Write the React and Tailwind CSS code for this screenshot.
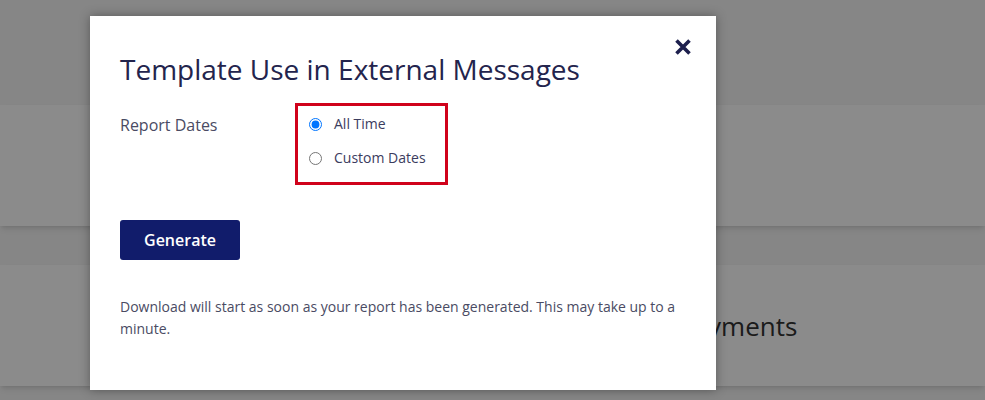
import React, { useState } from "react";

const App = () => {
  const [range, setRange] = useState("all");

  return (
    <div
      className="relative w-[985px] h-[400px] overflow-hidden bg-[#f6f6f6]"
      style={{ fontFamily: '"Open Sans", "Liberation Sans", sans-serif' }}
    >
      {/* ─── Page behind the modal ─── */}
      <div className="flex flex-col pt-[105px] gap-[39px]">
        <div className="h-[121px] bg-white shadow-md" />
        <div className="h-[121px] bg-white shadow-md grid grid-cols-[678px_1fr] items-center">
          <div />
          <h2 className="text-[26px] text-[#333] leading-none">Payments</h2>
        </div>
      </div>

      {/* ─── Overlay + Modal ─── */}
      <div className="absolute inset-0 bg-black/[0.455] pl-[90px] pt-[16px]">
        <div className="relative w-[626px] h-[374px] bg-white shadow-[0_0_10px_rgba(0,0,0,0.35)] px-[30px] pt-[34px]">
          <button className="absolute right-[23px] top-[21px] text-[#1d1f4d]">
            <svg width="20" height="20" viewBox="0 0 20 20">
              <path
                d="M3.5 3.5 L16.5 16.5 M16.5 3.5 L3.5 16.5"
                stroke="currentColor"
                strokeWidth="3.6"
                strokeLinecap="butt"
              />
            </svg>
          </button>

          <h1 className="text-[28px] leading-[38px] text-[#23244d]">
            Template Use in External Messages
          </h1>

          <div className="flex mt-[15px]">
            <div className="w-[175px] pt-[10px] text-[16px] leading-[24px] text-[#4a4b63]">
              Report Dates
            </div>
            <div className="w-[153px] border-[3px] border-[#d0021b] pl-[11px] pt-[8px] pb-[14px] flex flex-col gap-[14px]">
              <label className="flex items-center gap-[12px] text-[14px] leading-[20px] text-[#3b3c5e]">
                <input
                  type="radio"
                  name="range"
                  checked={range === "all"}
                  onChange={() => setRange("all")}
                  className="m-0 w-[13px] h-[13px]"
                />
                All Time
              </label>
              <label className="flex items-center gap-[12px] text-[14px] leading-[20px] text-[#3b3c5e]">
                <input
                  type="radio"
                  name="range"
                  checked={range === "custom"}
                  onChange={() => setRange("custom")}
                  className="m-0 w-[13px] h-[13px]"
                />
                Custom Dates
              </label>
            </div>
          </div>

          <button className="mt-[35px] w-[120px] h-[40px] rounded-[3px] bg-[#111c6b] text-white text-[16px] font-semibold">
            Generate
          </button>

          <p className="mt-[36px] text-[14px] leading-[22px] text-[#4a4b63]">
            Download will start as soon as your report has been generated. This may take up to a minute.
          </p>
        </div>
      </div>
    </div>
  );
};

export default App;
